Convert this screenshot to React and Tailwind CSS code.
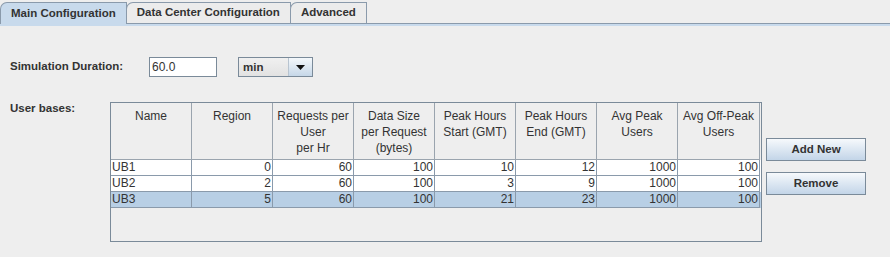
import React from "react";

const columns = [
  ["Name"],
  ["Region"],
  ["Requests per", "User", "per Hr"],
  ["Data Size", "per Request", "(bytes)"],
  ["Peak Hours", "Start (GMT)"],
  ["Peak Hours", "End (GMT)"],
  ["Avg Peak", "Users"],
  ["Avg Off-Peak", "Users"],
];

const rows = [
  ["UB1", 0, 60, 100, 10, 12, 1000, 100],
  ["UB2", 2, 60, 100, 3, 9, 1000, 100],
  ["UB3", 5, 60, 100, 21, 23, 1000, 100],
];

const gridCols = "grid grid-cols-[81px_81px_81px_81px_81px_81px_81px_82px]";

function Tab({ label, selected }) {
  return (
    <div
      className={
        "h-[21px] px-[10px] flex items-center font-bold text-[11.5px] border border-b-0 border-[#8a9aab] rounded-tl-[7px] -ml-px first:ml-0 " +
        (selected ? "bg-[#c8daec] relative z-10 h-[22px] -mb-px" : "bg-[#ececec]")
      }
    >
      {label}
    </div>
  );
}

function Button({ children }) {
  return (
    <button className="w-[100px] h-[23px] border border-[#7a8a99] bg-gradient-to-b from-[#f6f9fc] to-[#c3d5e8] font-bold text-[11.5px] text-[#333333]">
      {children}
    </button>
  );
}

export default function App() {
  return (
    <div className="w-[890px] h-[257px] bg-[#eeeeee] text-[12px] text-[#333333] font-['Liberation_Sans',Arial,sans-serif] overflow-hidden">
      {/* Tabs */}
      <div className="flex items-end h-[24px] pt-[2px] border-b border-[#8a9aab]">
        <Tab label="Main Configuration" selected />
        <Tab label="Data Center Configuration" />
        <Tab label="Advanced" />
      </div>
      <div className="h-[2px] bg-[#c8daec]" />

      <div className="pl-[10px] pt-[31px]">
        {/* Simulation duration */}
        <div className="flex items-center h-[20px]">
          <span className="w-[139px] font-bold text-[11.5px]">Simulation Duration:</span>
          <div className="w-[68px] h-[20px] bg-white border border-[#7a8a99] flex items-center pl-[2px]">
            60.0
          </div>
          <div className="ml-[21px] w-[75px] h-[20px] border border-[#7a8a99] flex bg-gradient-to-b from-[#f0f0f0] to-[#e2e2e2]">
            <span className="flex-1 font-bold text-[11.5px] pl-[4px] leading-[18px]">min</span>
            <div className="w-[24px] h-full border-l border-[#b8c4d0] bg-gradient-to-b from-[#f4f8fb] to-[#c6d7e8] flex items-center justify-center">
              <svg width="9" height="5" viewBox="0 0 9 5">
                <path d="M0 0 H9 L4.5 5 Z" fill="#111" />
              </svg>
            </div>
          </div>
        </div>

        {/* User bases */}
        <div className="flex mt-[25px]">
          <span className="w-[100px] font-bold text-[11.5px] leading-[14px] -mt-[1px]">User bases:</span>
          <div className="w-[652px] h-[140px] border border-[#7a8a99] bg-[#eeeeee]">
            <div className={gridCols + " h-[57px]"}>
              {columns.map((lines, i) => (
                <div
                  key={i}
                  className="border-r border-b border-[#9aa4ae] bg-[#eeeeee] text-center pt-[5px] leading-[16px]"
                >
                  {lines.map((l, j) => (
                    <div key={j}>{l}</div>
                  ))}
                </div>
              ))}
            </div>
            {rows.map((row, r) => (
              <div
                key={r}
                className={gridCols + " h-[16px] " + (r === 2 ? "bg-[#b8cfe5]" : "bg-white")}
              >
                {row.map((v, c) => (
                  <div
                    key={c}
                    className={
                      "border-r border-b border-[#8a9aab] leading-[15px] " +
                      (c === 0 ? "text-left pl-[1px]" : "text-right pr-[1px]")
                    }
                  >
                    {v}
                  </div>
                ))}
              </div>
            ))}
          </div>
          <div className="flex flex-col gap-[11px] ml-[4px] pt-[36px]">
            <Button>Add New</Button>
            <Button>Remove</Button>
          </div>
        </div>
      </div>
    </div>
  );
}
